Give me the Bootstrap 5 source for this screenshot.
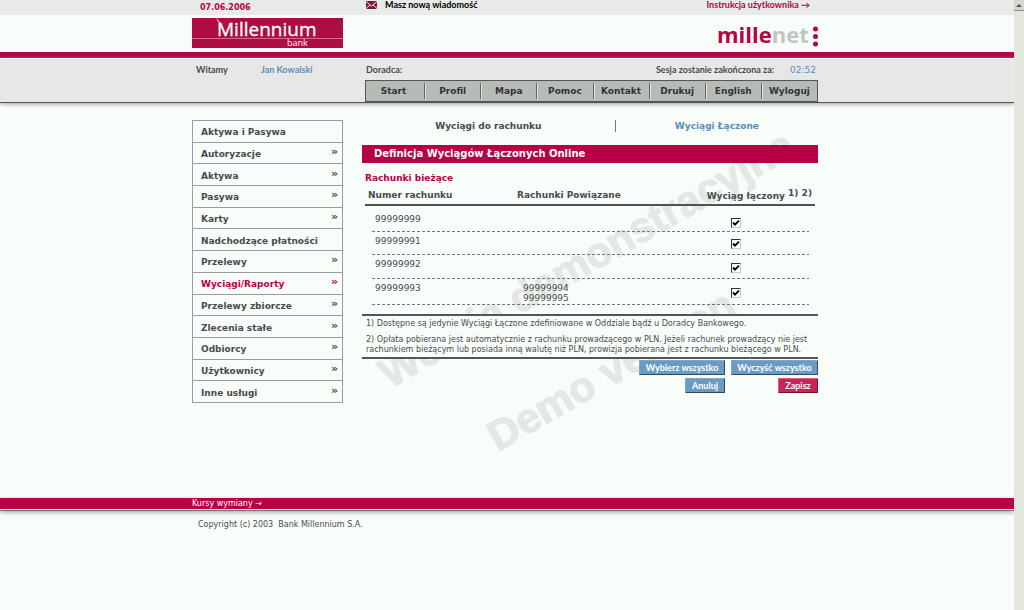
<!DOCTYPE html>
<html lang="pl">
<head>
<meta charset="utf-8">
<meta name="viewport" content="width=device-width, initial-scale=1">
<title>Millenet – Wyciągi Łączone</title>
<link href="https://cdn.jsdelivr.net/npm/bootstrap@5.3.0/dist/css/bootstrap.min.css" rel="stylesheet">
<style>
:root{--brand:#b80047;--ink:#484b49;--blue:#5b8dbc;--paper:#f8fdf9}
body{background:var(--paper);color:var(--ink);font:9px/10px "DejaVu Sans",Verdana,sans-serif}
a{color:inherit;text-decoration:none}
.page-width{width:100%;max-width:630px;padding-right:4px}
.aside-col{width:170px;flex:none}
.aside-col + div{min-width:0}
.topbar{background:#e8ebe8;height:15px;font-size:8px;font-weight:700}
.topbar a{font-family:Lato,sans-serif;font-size:9px;white-space:nowrap}
.topbar svg{margin-top:1px}
.brand-text{color:var(--brand)}
.blue-text{color:var(--blue)}
.logo-row{height:37px;padding-top:3px}
.bank-logo{width:151px;height:30px;display:block;overflow:visible}
.millenet-logo{width:104px;height:30px;display:block;overflow:visible}
.rule-bar{background:var(--brand);height:6px}
.session{background:#e8e7e7;border-top:1px solid #fff;border-bottom:1px solid #555;box-shadow:0 1px 4px #9a9d9a}
.session-line{height:21px;padding-top:6px;font:700 9px/10px Lato,sans-serif}
.session-line .clock{font:400 9px/10px "DejaVu Sans",sans-serif;padding-right:2px}
.greeting{width:65px}
.main-menu{background:#b7bbb7;border:1px solid #555;height:22px;margin-left:3px;padding:2px 0;font-weight:700;color:#333}
.main-menu a{flex:1 1 0;text-align:center;line-height:17px;border-left:1px solid #666;box-shadow:inset 1px 0 #dfe2df}
.main-menu a:first-child{border-left:0;box-shadow:none;padding-right:3px}
.work-area{min-height:395px;padding-top:17px}
.side-menu{width:151px;min-height:283px;border:1px solid #9a9d9a;font-weight:700}
.side-menu a{flex:1 1 0;display:flex;justify-content:space-between;align-items:center;padding:2px 4px 0 8px;border-top:1px solid #9a9d9a}
.side-menu a:first-child{border-top:0}
.side-menu i{font-style:normal;font-size:11px;padding-bottom:4px}
.side-menu .current{color:var(--brand)}
.watermark{position:absolute;left:170px;top:13px;width:456px;height:350px;z-index:-1;fill:#e4e8e4;font:700 42px "Liberation Sans",Arial,sans-serif;overflow:visible}
.watermark text{stroke:#e4e8e4;stroke-width:1}
.tabs-row{height:25px;font-weight:700}
.tabs-row a{flex:5 1 0;text-align:center;line-height:12px}
.tabs-row a + a{flex-grow:4;border-left:1px solid #777}
.section-bar{background:var(--brand);color:#fff;font-size:10px;font-weight:700;line-height:18px;height:18px;padding-left:12px;margin:0}
.sub-title{font-size:9px;font-weight:700;line-height:12px;margin:9px 0 0 3px}
.accounts{margin-left:3px;width:calc(100% - 6px);table-layout:fixed}
.accounts th{padding:6px 3px 3px;vertical-align:top;line-height:11px;white-space:nowrap}
.accounts thead tr{border-bottom:2px solid #505250}
.accounts thead th:last-child{padding-top:7px;padding-bottom:2px}
.accounts thead th:nth-child(2){padding-left:0}
.accounts sup{font-size:9px;line-height:0;top:-3px}
.accounts td{padding:4px 0 0 10px;vertical-align:top;height:23px}
.accounts td + td{padding-left:6px}
.accounts td.pick{padding:1px 0 0;text-align:center;vertical-align:middle}
.accounts tbody tr{background:repeating-linear-gradient(90deg,#777 0 3px,transparent 3px 5px) 7px 100%/calc(100% - 13px) 1px no-repeat}
.accounts tbody tr:first-child td{padding-top:8px;height:27px}
.accounts tbody tr:nth-child(3) td{height:24px}
.accounts tbody tr:last-child td{height:26px}
.c1{width:152px}.c2{width:140px}
.tick{appearance:none;display:block;width:10px;height:10px;margin:0 auto;border:1px solid;border-color:#333 #c8cac8 #c8cac8 #333;background:#fff}
.tick:checked{background-image:url("data:image/svg+xml,%3Csvg xmlns='http://www.w3.org/2000/svg' viewBox='0 0 8 8'%3E%3Cpath d='M1 3.5 3 5.7 7 1.7' fill='none' stroke='%23000' stroke-width='1.9'/%3E%3C/svg%3E")}
.notes{margin-top:9px;background:var(--paper);border-top:2px solid #555;border-bottom:2px solid #555;padding:3px 0 2px 4px;font-size:8px}
.notes p{margin:0 0 6px}
.notes p:last-child{margin:0}
.act{border:1px solid;border-color:#7fa7cb #2e4a63 #2e4a63 #7fa7cb;border-radius:1px;background:#6b9bc3;color:#fff;font:700 9px/12px Lato,sans-serif;height:15px;padding:0 2px;text-align:center;white-space:nowrap}
.act.save{background:#cb2458;border-color:#dc5c82 #6d1733 #6d1733 #dc5c82}
.act-grid{display:grid;grid-template-columns:86px 87px;justify-content:end;column-gap:6px;row-gap:3px;padding-top:1px}
.act-grid .short{justify-self:end;min-width:40px}
.foot-bar{background:var(--brand);color:#fff;height:12px;font-size:8px;line-height:12px;border-bottom:1px solid #eee;box-shadow:0 1px #777,0 2px 5px #999}
.copy{padding:10px 0 0 6px;font-size:8px;white-space:pre}
.scroll-rail{width:10px;flex:none;background:#e4e6df}
.scroll-rail button{display:block;width:10px;height:11px;border:0;border-bottom:1px solid #888;background:#d5d6cf;padding:0}
.scroll-rail svg{display:block;margin:0 auto}
</style>
</head>
<body>
<div class="d-flex min-vh-100">
<div class="flex-grow-1">
  <header>
    <div class="topbar"><div class="page-width mx-auto d-flex">
      <div class="aside-col brand-text ps-2 pt-1 lh-1">07.06.2006</div>
      <div class="d-flex flex-grow-1 justify-content-between">
        <a href="#" class="d-flex gap-2 text-black ms-1"><svg width="11" height="8" viewBox="0 0 11 8" aria-hidden="true"><path fill="#7c1c3c" d="M0 0h11v8H0z"/><path d="M0 .5 5.500 5 11 .5M0 7.500 4 4M11 7.500 7 4" fill="none" stroke="#f3dfe5"/></svg>Masz nową wiadomość</a>
        <a href="#" class="brand-text me-2">Instrukcja użytkownika →</a>
      </div>
    </div></div>
    <div class="page-width mx-auto logo-row d-flex justify-content-between">
      <svg class="bank-logo" viewBox="0 0 151 30" role="img" aria-label="Millennium bank" font-family="Open Sans, sans-serif" fill="#fff"><path fill="#ae0d43" d="M0 0h151v30H0z"/><path d="M0 20.500h151" stroke="#d66f90"/><path d="M24 0q3 2 6 9l-1 1Q27 4 24 0"/><text x="25" y="18" font-size="19" stroke="#fff" stroke-width=".3">Millennium</text><text x="95" y="28" font-size="9">bank</text></svg>
      <svg class="millenet-logo" viewBox="0 0 104 30" role="img" aria-label="millenet" font-family="Open Sans, sans-serif" font-size="22" font-weight="700"><text x="3" y="25" fill="#b80047">mille<tspan fill="#bfc6c2">net</tspan></text><g fill="#b80047"><circle cx="101.500" cy="11" r="2.500"/><circle cx="101.500" cy="18.500" r="2.500"/><circle cx="101.500" cy="26" r="2.500"/></g></svg>
    </div>
    <div class="rule-bar"></div>
    <div class="session"><div class="page-width mx-auto d-flex">
      <div class="aside-col d-flex session-line ps-1"><span class="greeting">Witamy</span><a href="#" class="blue-text">Jan Kowalski</a></div>
      <div class="flex-grow-1">
        <div class="session-line d-flex ps-1"><span class="me-auto">Doradca:</span><span>Sesja zostanie zakończona za:</span><span class="clock blue-text ms-3">02:52</span></div>
        <nav class="main-menu d-flex" aria-label="Menu główne"><a href="#">Start</a><a href="#">Profil</a><a href="#">Mapa</a><a href="#">Pomoc</a><a href="#">Kontakt</a><a href="#">Drukuj</a><a href="#">English</a><a href="#">Wyloguj</a></nav>
      </div>
    </div></div>
  </header>
  <main class="page-width mx-auto d-flex position-relative z-0 work-area">
    <svg class="watermark" viewBox="362 120 456 350" aria-hidden="true"><text transform="translate(390 393) rotate(-30)">Wersja demonstracyjna</text><text transform="translate(498 456) rotate(-30)">Demo version</text></svg>
    <div class="aside-col">
      <nav class="side-menu d-flex flex-column" aria-label="Menu boczne">
        <a href="#">Aktywa i Pasywa</a><a href="#">Autoryzacje<i>»</i></a><a href="#">Aktywa<i>»</i></a><a href="#">Pasywa<i>»</i></a><a href="#">Karty<i>»</i></a><a href="#">Nadchodzące płatności</a><a href="#">Przelewy<i>»</i></a><a href="#" class="current">Wyciągi/Raporty<i>»</i></a><a href="#">Przelewy zbiorcze<i>»</i></a><a href="#">Zlecenia stałe<i>»</i></a><a href="#">Odbiorcy<i>»</i></a><a href="#">Użytkownicy<i>»</i></a><a href="#">Inne usługi<i>»</i></a>
      </nav>
    </div>
    <div class="flex-grow-1">
      <nav class="tabs-row d-flex align-items-start" aria-label="Wyciągi"><a href="#">Wyciągi do rachunku</a><a href="#" class="blue-text">Wyciągi Łączone</a></nav>
      <h1 class="section-bar">Definicja Wyciągów Łączonych Online</h1>
      <h2 class="sub-title brand-text">Rachunki bieżące</h2>
      <table class="accounts">
        <colgroup><col class="c1"><col class="c2"><col></colgroup>
        <thead><tr><th>Numer rachunku</th><th>Rachunki Powiązane</th><th class="text-end">Wyciąg łączony <sup>1) 2)</sup></th></tr></thead>
        <tbody>
          <tr><td>99999999</td><td></td><td class="pick"><input class="tick" type="checkbox" aria-label="Wyciąg łączony 99999999" checked></td></tr>
          <tr><td>99999991</td><td></td><td class="pick"><input class="tick" type="checkbox" aria-label="Wyciąg łączony 99999991" checked></td></tr>
          <tr><td>99999992</td><td></td><td class="pick"><input class="tick" type="checkbox" aria-label="Wyciąg łączony 99999992" checked></td></tr>
          <tr><td>99999993</td><td>99999994<br>99999995</td><td class="pick"><input class="tick" type="checkbox" aria-label="Wyciąg łączony 99999993" checked></td></tr>
        </tbody>
      </table>
      <div class="notes">
        <p>1) Dostępne są jedynie Wyciągi Łączone zdefiniowane w Oddziale bądź u Doradcy Bankowego.</p>
        <p>2) Opłata pobierana jest automatycznie z rachunku prowadzącego w PLN. Jeżeli rachunek prowadzący nie jest rachunkiem bieżącym lub posiada inną walutę niż PLN, prowizja pobierana jest z rachunku bieżącego w PLN.</p>
      </div>
      <div class="act-grid">
        <button type="button" class="act">Wybierz wszystko</button><button type="button" class="act">Wyczyść wszystko</button>
        <button type="button" class="act short">Anuluj</button><button type="button" class="act save short">Zapisz</button>
      </div>
    </div>
  </main>
  <footer>
    <div class="foot-bar"><div class="page-width mx-auto"><a href="#">Kursy wymiany →</a></div></div>
    <div class="page-width mx-auto copy">Copyright (c) 2003  Bank Millennium S.A.</div>
  </footer>
</div>
<div class="scroll-rail"><button type="button" aria-label="Przewiń w górę"><svg width="6" height="4" viewBox="0 0 6 4"><path d="M0 4 3 1l3 3z" fill="#555"/></svg></button></div>
</div>
<script src="https://cdn.jsdelivr.net/npm/bootstrap@5.3.0/dist/js/bootstrap.bundle.min.js"></script>
</body>
</html>
